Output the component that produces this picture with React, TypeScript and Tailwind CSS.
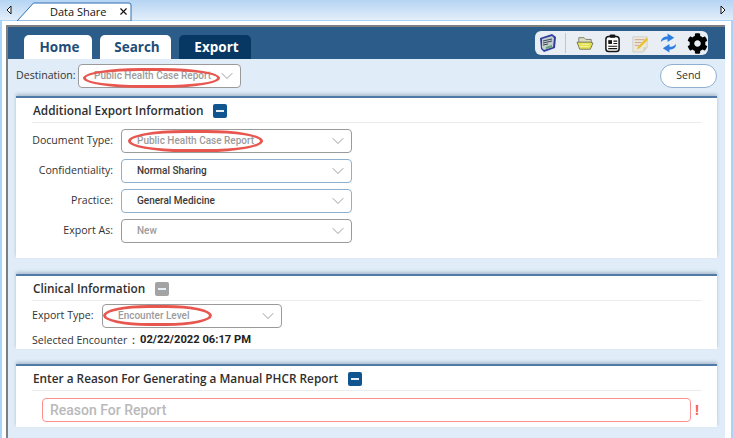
import { ReactNode } from "react";
import { ChevronDown, X } from "lucide-react";
import { FaCog } from "react-icons/fa";

const uiFont = "font-['Open_Sans','Noto_Sans',sans-serif]";
const fieldFont = "font-['Roboto',sans-serif]";

function Ring({ className }: { className: string }) {
  return (
    <span
      className={`absolute rounded-[42%/50%] border-[3px] border-[#e8574f] pointer-events-none ${className}`}
    />
  );
}

function Select({
  value,
  muted,
  active,
  className,
  children,
}: {
  value: string;
  muted?: boolean;
  active?: boolean;
  className: string;
  children?: ReactNode;
}) {
  return (
    <div
      className={`relative h-[24px] flex items-center justify-between rounded-[4px] border bg-white ${
        active ? "border-[#8fafcf]" : "border-[#9a9a9a]"
      } ${className}`}
    >
      <span
        className={`${fieldFont} pl-[15px] text-[10px] font-medium leading-none whitespace-nowrap ${
          muted ? "text-[#9c9c9c]" : "text-[#3a3a3a]"
        }`}
      >
        {value}
      </span>
      <ChevronDown
        className="w-[20px] h-[20px] mr-[3px] text-[#8a8a8a]"
        strokeWidth={1}
      />
      {children}
    </div>
  );
}

function Toggle({ off }: { off?: boolean }) {
  return (
    <span
      className={`w-[14px] h-[14px] rounded-[2px] flex items-center justify-center ${
        off ? "bg-[#a3a3a3]" : "bg-[#10558f]"
      }`}
    >
      <span className="w-[8px] h-[2px] bg-[#e8eef5]" />
    </span>
  );
}

function Section({
  title,
  off,
  className,
  children,
}: {
  title: string;
  off?: boolean;
  className: string;
  children: ReactNode;
}) {
  return (
    <section
      className={`ml-[8px] w-[701px] bg-white border-t-[2px] border-[#4f7ba6] shadow-[0_-2px_3px_rgba(60,90,120,0.3)] ${className}`}
    >
      <div className="mx-[16px] w-[670px] h-[25px] flex items-center gap-[10px] pl-[1px] pt-[2px] border-b border-[#ececec]">
        <h2 className={`${uiFont} text-[11.8px] font-semibold text-[#2e2e2e] leading-none`}>
          {title}
        </h2>
        <Toggle off={off} />
      </div>
      {children}
    </section>
  );
}

function Row({ label, children }: { label: string; children: ReactNode }) {
  return (
    <div className="flex items-center h-[24px]">
      <label className={`${uiFont} w-[97px] text-right text-[10.6px] text-[#333] mr-[8px]`}>
        {label}
      </label>
      {children}
    </div>
  );
}

function NotebookIcon() {
  return (
    <svg viewBox="0 0 20 20" className="w-[20px] h-[20px]">
      <path d="M2 5 14 1l4 3-1 11-11 4-3-3z" fill="#2f3f9e" />
      <path d="M4 6 14 3l2 2-1 9-9 3-2-2z" fill="#c3cbd0" />
      <path d="M5 8l9-2M5 10l9-2M5 12l5-1" stroke="#3c4a55" strokeWidth="1" />
      <path d="M8 14l6-2v2l-6 2z" fill="#5aa36a" />
    </svg>
  );
}

function FolderIcon() {
  return (
    <svg viewBox="0 0 20 18" className="w-[18px] h-[16px]">
      <path d="M3 6V3h6l2 2h6v4H3z" fill="#dcdcc0" stroke="#77776a" strokeWidth="1" />
      <path d="M1 8h15l3 1-3 7H4z" fill="#e4e24a" stroke="#6d6d5c" strokeWidth="1" />
      <path d="M5 10.500h10M4 13h10" stroke="#f4f3b4" strokeWidth="1" />
    </svg>
  );
}

function ClipboardIcon() {
  return (
    <svg viewBox="0 0 18 20" className="w-[17px] h-[20px]" fill="none">
      <rect x="2" y="3" width="14" height="16" rx="3" fill="#fff" stroke="#151515" strokeWidth="1.6" />
      <rect x="6" y="1" width="6" height="3.5" rx="1" fill="#151515" />
      <rect x="4.500" y="7" width="4" height="4" fill="#151515" />
      <path d="M10 8h4M10 10.500h4M4.500 13.500h9.500M4.500 16h9.500" stroke="#151515" strokeWidth="1.2" />
    </svg>
  );
}

function NoteIcon() {
  return (
    <svg viewBox="0 0 20 20" className="w-[19px] h-[19px]">
      <path d="M2 3h15v11l-4 5H2z" fill="#ebe9dc" stroke="#cfcfc4" strokeWidth="1" />
      <path d="M4 6h10M4 9h7M4 12h5" stroke="#d09c8e" strokeWidth="1" />
      <path d="M7 14 16 4l2 2-9 9-3 1z" fill="#e8c22f" />
      <path d="M13 19v-5h4z" fill="#d2d2c6" />
    </svg>
  );
}

function RefreshIcon() {
  return (
    <svg viewBox="0 0 18 20" className="w-[17px] h-[20px]" fill="#2f7de0">
      <path d="M1 9c0-4 3-6 7-6V0l7 4.500L8 9V6C5 6 3 7 1 9z" />
      <path d="M17 11c0 4-3 6-7 6v3l-7-4.500L10 11v3c3 0 5-1 7-3z" />
    </svg>
  );
}

function StripArrow({ flip }: { flip?: boolean }) {
  return (
    <svg viewBox="0 0 6 10" className={`w-[6px] h-[10px] ${flip ? "rotate-180" : ""}`}>
      <path d="M5 1 1 5l4 4z" fill="#fff" stroke="#111" strokeWidth="1" />
    </svg>
  );
}

export default function App() {
  return (
    <div className={`${uiFont} relative w-[733px] h-[438px] overflow-hidden bg-white`}>
      {/* Tab strip */}
      <div className="h-[21px] flex items-end justify-between bg-gradient-to-b from-[#b5d4f3] to-[#e3eefa] border-b border-[#a8d4fa]">
        <div className="flex items-end h-full">
          <span className="w-[17px] h-full flex items-center justify-center">
            <StripArrow />
          </span>
          <div className="relative w-[115px] h-[19px] flex items-center mb-[-1px]">
            <svg viewBox="0 0 115 19" className="absolute inset-0 w-[115px] h-[19px]">
              <path d="M0 19 16.500 1H112a2 2 0 0 1 2 2V19Z" fill="#fff" stroke="#2c6fb5" strokeWidth="1" />
            </svg>
            <span className="relative ml-[33px] w-[68px] text-[11px] text-[#111] font-medium leading-none">
              Data Share
            </span>
            <X className="relative w-[11px] h-[11px] text-[#111]" strokeWidth={2.5} />
          </div>
        </div>
        <span className="w-[17px] h-full flex items-center justify-center mr-[2px]">
          <StripArrow flip />
        </span>
      </div>

      {/* Window */}
      <div className="mt-[4px] ml-[6px] w-[719px] h-[413px] flex flex-col bg-[#e0ecf8] border-l-[2px] border-t-[2px] border-[#7f7f7f]">
        <header className="h-[32px] shrink-0 flex items-end justify-between bg-[#2b5c8a] pl-[16px] pr-[17px]">
          <nav className="flex gap-[8px]">
            <div className="w-[68px] h-[24px] pl-[3px] flex items-center justify-center rounded-t-[5px] bg-white text-[13.5px] font-bold text-[#1f4d78]">
              Home
            </div>
            <div className="w-[71px] h-[24px] pl-[3px] flex items-center justify-center rounded-t-[5px] bg-white text-[13.5px] font-bold text-[#1f4d78]">
              Search
            </div>
            <div className="w-[72px] h-[24px] pl-[3px] flex items-center justify-center rounded-t-[5px] bg-[#073763] text-[13.5px] font-bold text-white">
              Export
            </div>
          </nav>
          <div className="h-[24px] w-[173px] mb-[4px] flex items-center gap-[10px] pl-[3px] rounded-[6px] bg-[#e8eef4]">
            <NotebookIcon />
            <span className="w-px h-[20px] bg-[#c0c6cc] ml-[-3px]" />
            <FolderIcon />
            <ClipboardIcon />
            <NoteIcon />
            <RefreshIcon />
            <FaCog className="w-[21px] h-[21px] text-black" />
          </div>
        </header>

        <div className="h-[24px] shrink-0 mt-[5px] flex items-center pl-[8px]">
          <label className="text-[10.6px] text-[#333] w-[62px]">Destination:</label>
          <Select value="Public Health Case Report" muted className="w-[163px]">
            <Ring className="left-[4px] top-[3px] w-[137px] h-[20px]" />
          </Select>
          <button className="ml-[419px] w-[57px] h-[24px] rounded-full bg-white border border-[#8fafcf] text-[10.5px] text-[#333]">
            Send
          </button>
        </div>

        <Section title="Additional Export Information" className="mt-[8px] h-[162px]">
          <div className="mt-[6px] flex flex-col gap-[6px]">
            <Row label="Document Type:">
              <Select value="Public Health Case Report" muted className="w-[231px]">
                <Ring className="left-[6px] top-[0px] w-[135px] h-[22px]" />
              </Select>
            </Row>
            <Row label="Confidentiality:">
              <Select value="Normal Sharing" active className="w-[231px]" />
            </Row>
            <Row label="Practice:">
              <Select value="General Medicine" active className="w-[231px]" />
            </Row>
            <Row label="Export As:">
              <Select value="New" muted className="w-[231px]" />
            </Row>
          </div>
        </Section>

        <Section title="Clinical Information" off className="mt-[16px] h-[75px]">
          <div className="mt-[3px] ml-[16px] flex items-center h-[24px]">
            <label className="text-[10.6px] text-[#333] w-[70px]">Export Type:</label>
            <Select value="Encounter Level" muted className="w-[180px]">
              <Ring className="left-[0px] top-[0px] w-[109px] h-[21px]" />
            </Select>
          </div>
          <p className="ml-[16px] mt-[5px] flex text-[10.6px] leading-[14px] text-[#333] whitespace-nowrap">
            <span className="w-[100px]">Selected Encounter</span>
            <span className="w-[8px] font-semibold">:</span>
            <span className={`${fieldFont} text-[11.2px] font-bold text-[#222]`}>
              02/22/2022 06:17 PM
            </span>
          </p>
        </Section>

        <Section
          title="Enter a Reason For Generating a Manual PHCR Report"
          className="mt-[15px] h-[63px]"
        >
          <div className="mt-[7px] ml-[26px] flex items-center">
            <input
              readOnly
              placeholder="Reason For Report"
              className={`${fieldFont} w-[649px] h-[24px] px-[7px] rounded-[4px] border border-[#ff8f8f] text-[14px] font-medium bg-white outline-none placeholder:text-[#b9b9b9]`}
            />
            <span className="ml-[4px] text-[14px] font-bold text-[#f4635c] leading-none">!</span>
          </div>
        </Section>
      </div>
      <span className="absolute left-0 top-[21px] bottom-0 w-[2px] bg-[#a8d4fa]" />
      <span className="absolute right-0 top-[21px] bottom-0 w-[2px] bg-[#a8d4fa]" />
    </div>
  );
}
